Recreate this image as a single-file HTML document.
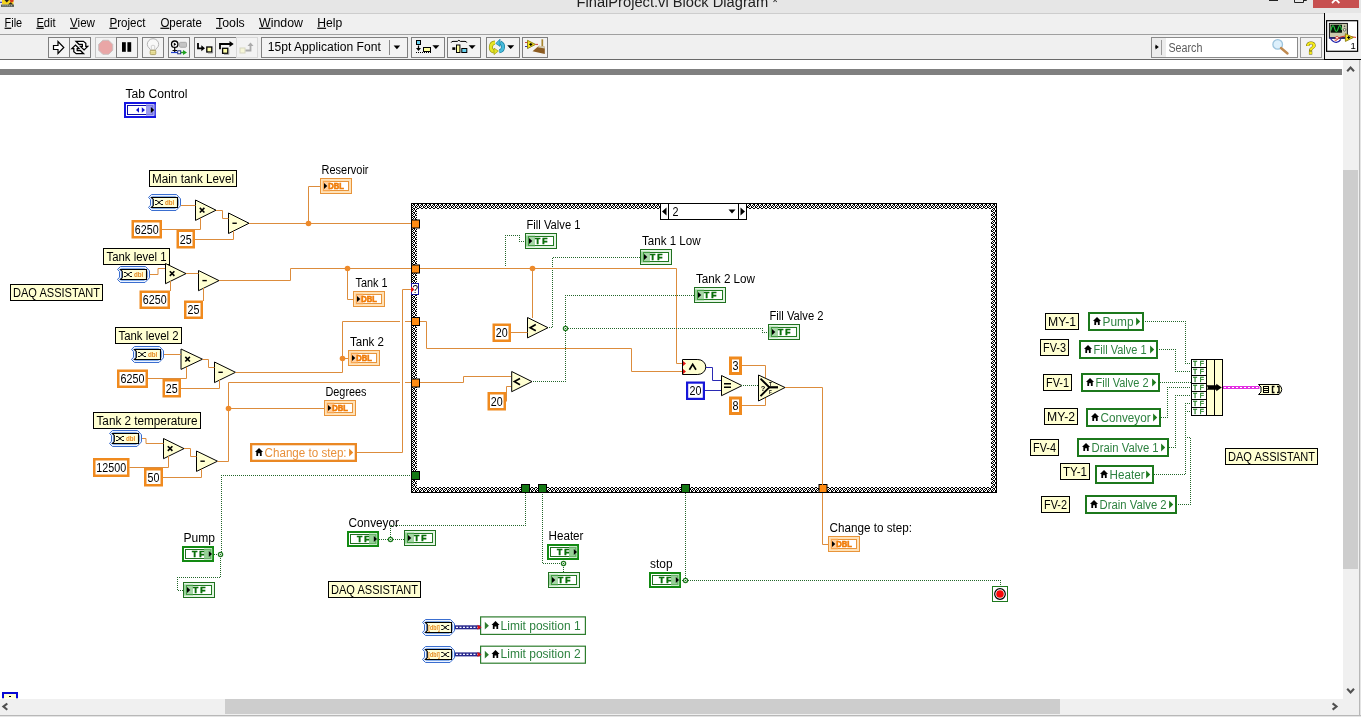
<!DOCTYPE html>
<html><head><meta charset="utf-8"><title>FinalProject.vi Block Diagram *</title>
<style>
html,body{margin:0;padding:0;background:#fff;}
body{width:1361px;height:717px;overflow:hidden;position:relative;font-family:"Liberation Sans", Arial, sans-serif;font-size:12px;color:#000;}
.abs{position:absolute;}
#title{left:0;top:0;width:1361px;height:13px;background:#E6E6E6;}
#menubar{left:0;top:13px;width:1361px;height:21px;background:#F0F0F0;border-top:1px solid #CDCDCD;box-sizing:border-box;}
#toolbar{left:0;top:34px;width:1325px;height:26px;background:#F0F0F0;border-top:1px solid #A0A0A0;border-bottom:1px solid #696969;box-sizing:border-box;}
#gap{left:0;top:60px;width:1343px;height:9px;background:#fff;}
#band{left:0;top:69px;width:1342px;height:6px;background:#808080;}
#vscroll{left:1343px;top:60px;width:16px;height:639px;background:#F0F0F0;}
#vthumb{left:1343px;top:170px;width:15px;height:399px;background:#CDCDCD;}
#hscroll{left:0;top:699px;width:1359px;height:16px;background:#F0F0F0;}
#hthumb{left:225px;top:699px;width:835px;height:15px;background:#CDCDCD;}
#redge{left:1359px;top:60px;width:2px;height:657px;background:#E4E4E4;border-left:1px solid #B8B8B8;box-sizing:border-box;}
#bedge{left:0;top:715px;width:1361px;height:2px;background:#E4E4E4;border-top:1px solid #B8B8B8;box-sizing:border-box;}
#iconpane{left:1324px;top:13px;width:37px;height:47px;background:#F0F0F0;border-left:1px solid #000;border-bottom:1px solid #000;box-sizing:border-box;}
svg text{font-family:"Liberation Sans", Arial, sans-serif;}
</style></head><body>
<div id="title" class="abs"></div>
<div id="menubar" class="abs"></div>
<div id="toolbar" class="abs"></div>
<div id="gap" class="abs"></div>
<div id="band" class="abs"></div>
<div id="vscroll" class="abs"></div><div id="vthumb" class="abs"></div>
<div id="hscroll" class="abs"></div><div id="hthumb" class="abs"></div>
<div id="redge" class="abs"></div><div id="bedge" class="abs"></div>
<div id="iconpane" class="abs"></div>
<!--TOOLBAR-->
<svg class="abs" style="left:0;top:0;will-change:transform" width="1361" height="717" viewBox="0 0 1361 717">
<defs>
<pattern id="gdots" width="2" height="2" patternUnits="userSpaceOnUse"><rect x="0" y="0" width="1" height="1" fill="#22662A"/><rect x="1" y="1" width="1" height="1" fill="#22662A"/></pattern>
<pattern id="chk" width="4" height="4" patternUnits="userSpaceOnUse"><rect width="4" height="4" fill="#fff"/><rect x="1" y="0" width="1" height="1" fill="#000"/><rect x="2" y="0" width="1" height="1" fill="#000"/><rect x="0" y="1" width="1" height="1" fill="#000"/><rect x="2" y="1" width="1" height="1" fill="#000"/><rect x="1" y="2" width="1" height="1" fill="#000"/><rect x="3" y="2" width="1" height="1" fill="#000"/><rect x="0" y="3" width="1" height="1" fill="#000"/><rect x="3" y="3" width="1" height="1" fill="#000"/></pattern>
</defs>
<g id="chrome">
<text x="4.6" y="26.7" font-size="12" fill="#000" textLength="17.6" lengthAdjust="spacingAndGlyphs"><tspan text-decoration="underline">F</tspan>ile</text>
<text x="36.4" y="26.7" font-size="12" fill="#000" textLength="19.2" lengthAdjust="spacingAndGlyphs"><tspan text-decoration="underline">E</tspan>dit</text>
<text x="70" y="26.7" font-size="12" fill="#000" textLength="25" lengthAdjust="spacingAndGlyphs"><tspan text-decoration="underline">V</tspan>iew</text>
<text x="109.4" y="26.7" font-size="12" fill="#000" textLength="36.2" lengthAdjust="spacingAndGlyphs"><tspan text-decoration="underline">P</tspan>roject</text>
<text x="160.4" y="26.7" font-size="12" fill="#000" textLength="41.5" lengthAdjust="spacingAndGlyphs"><tspan text-decoration="underline">O</tspan>perate</text>
<text x="216" y="26.7" font-size="12" fill="#000" textLength="28.8" lengthAdjust="spacingAndGlyphs"><tspan text-decoration="underline">T</tspan>ools</text>
<text x="259" y="26.7" font-size="12" fill="#000" textLength="44" lengthAdjust="spacingAndGlyphs"><tspan text-decoration="underline">W</tspan>indow</text>
<text x="317.3" y="26.7" font-size="12" fill="#000" textLength="25" lengthAdjust="spacingAndGlyphs"><tspan text-decoration="underline">H</tspan>elp</text>
<text x="576.5" y="6.8" font-size="15.5" fill="#1E1E1E" textLength="201.5" lengthAdjust="spacingAndGlyphs">FinalProject.vi Block Diagram *</text>
<rect x="48.5" y="37.5" width="21" height="20" fill="#F3F3F3" stroke="#7F7F7F" stroke-width="1"/>
<rect x="69.5" y="37.5" width="21" height="20" fill="#F3F3F3" stroke="#7F7F7F" stroke-width="1"/>
<rect x="95.5" y="37.5" width="21" height="20" fill="#F3F3F3" stroke="#C4C4C4" stroke-width="1"/>
<rect x="116.5" y="37.5" width="21" height="20" fill="#F3F3F3" stroke="#7F7F7F" stroke-width="1"/>
<rect x="142.5" y="37.5" width="21" height="20" fill="#F3F3F3" stroke="#7F7F7F" stroke-width="1"/>
<rect x="168.5" y="37.5" width="21" height="20" fill="#F3F3F3" stroke="#7F7F7F" stroke-width="1"/>
<rect x="194.5" y="37.5" width="21" height="20" fill="#F3F3F3" stroke="#7F7F7F" stroke-width="1"/>
<rect x="215.5" y="37.5" width="21" height="20" fill="#F3F3F3" stroke="#7F7F7F" stroke-width="1"/>
<rect x="236.5" y="37.5" width="21" height="20" fill="#F3F3F3" stroke="#D8D8D8" stroke-width="1"/>
<path d="M53.5 45.5 H58 V41.5 L63.8 47.5 L58 53.5 V49.5 H53.5 Z" fill="#fff" stroke="#000" stroke-width="1.2" stroke-linejoin="miter"/>
<path d="M76.0 41.3 L83.4 41.3 L85.8 43.3 L85.8 46.4 L87.7 46.4 L84.1 49.9 L80.5 46.4 L82.4 46.4 L82.4 44.3 L79.0 44.3 Z" fill="#fff" stroke="#000" stroke-width="1.25" stroke-linejoin="miter"/>
<path d="M83.6 53.7 L76.2 53.7 L73.8 51.7 L73.8 48.6 L71.9 48.6 L75.5 45.1 L79.1 48.6 L77.2 48.6 L77.2 50.7 L80.6 50.7 Z" fill="#fff" stroke="#000" stroke-width="1.25" stroke-linejoin="miter"/>
<polygon points="112.72,50.21 108.61,54.32 102.79,54.32 98.68,50.21 98.68,44.39 102.79,40.28 108.61,40.28 112.72,44.39" fill="#E9A6A6" stroke="#C9C0C0" stroke-width="1"/>
<rect x="122" y="42.2" width="3.8" height="9.6" fill="#000"/><rect x="127.4" y="42.2" width="3.8" height="9.6" fill="#000"/>
<path d="M150.6 50.2 C150.6 48.6 147.3 47.6 147.3 44.4 A5.7 5.7 0 0 1 158.7 44.4 C158.7 47.6 155.4 48.6 155.4 50.2 Z" fill="#F8F8F8" stroke="#B4B4B4" stroke-width="1"/>
<path d="M151.3 49.5 V45.8 Q153 44.6 154.7 45.8 V49.5" fill="none" stroke="#D0D0D0" stroke-width="1"/>
<rect x="150.2" y="50.2" width="5.6" height="4.4" rx="1" fill="#D9CC7C" stroke="#9A8C48" stroke-width="0.7"/>
<path d="M150.6 51.6 H155.4 M150.6 53.1 H155.4" stroke="#F6F0B8" stroke-width="0.7"/>
<circle cx="174.7" cy="44.2" r="3.2" fill="#fff" stroke="#000" stroke-width="1.3"/>
<path d="M173.8 42.5 L176.3 44.2 L173.8 46 Z" fill="#000"/>
<path d="M174.7 47.5 V52 M172.5 50.5 H177" stroke="#000" stroke-width="1.2"/>
<rect x="179.5" y="42.3" width="7" height="5" rx="1" fill="#C4C4C4" stroke="#A0A0A0" stroke-width="0.8"/>
<path d="M171 52.5 H178" stroke="#2040D0" stroke-width="1.2"/>
<rect x="177.7" y="50.8" width="3" height="3" fill="#fff" stroke="#203080" stroke-width="1"/>
<path d="M181 52.5 H184" stroke="#20A020" stroke-width="1.4"/><path d="M183 50 L187 52.5 L183 55 Z" fill="#20A020"/>
<path d="M198 43 V48.3 H202" fill="none" stroke="#000" stroke-width="1.8"/><path d="M201.3 45.3 L205 48.3 L201.3 51.3 Z" fill="#000"/>
<rect x="206.8" y="47" width="5" height="5" fill="#FFFFA8" stroke="#000" stroke-width="1.3"/>
<path d="M208 53 H212.6 V48" fill="none" stroke="#888" stroke-width="0.8"/>
<path d="M220 49.3 V44 H230" fill="none" stroke="#000" stroke-width="1.8"/><path d="M229.5 41 L233.7 44 L229.5 47 Z" fill="#000"/>
<rect x="222.6" y="48.3" width="5.2" height="5" fill="#FFFFA8" stroke="#000" stroke-width="1.3"/>
<path d="M224 54.3 H228.8 V49.5" fill="none" stroke="#888" stroke-width="0.8"/>
<rect x="240" y="48" width="5" height="5" fill="#F6F6D8" stroke="#D6D6C0" stroke-width="1"/>
<path d="M245.5 50.5 H250.5 V45.5" fill="none" stroke="#ABABAB" stroke-width="1.8"/><path d="M247.5 46 L250.5 42.5 L253.5 46 Z" fill="#ABABAB"/>
<rect x="261.5" y="37.5" width="146" height="20" fill="#F3F3F3" stroke="#7F7F7F" stroke-width="1"/>
<path d="M389.5 40 V55" stroke="#8A8A8A" stroke-width="1"/>
<path d="M393.6 45.6 H400.2 L396.9 49.2 Z" fill="#000"/>
<text x="267.8" y="51.2" font-size="12.5" textLength="113" lengthAdjust="spacingAndGlyphs" fill="#000">15pt Application Font</text>
<rect x="411.5" y="37.5" width="33" height="20" fill="#F3F3F3" stroke="#7F7F7F" stroke-width="1"/>
<rect x="416.5" y="40.5" width="4" height="4" fill="#66D0EE" stroke="#000" stroke-width="1"/>
<path d="M418.5 45.5 V50" stroke="#000" stroke-width="1.2"/><path d="M416 48 H421 L418.5 51 Z" fill="#000"/>
<path d="M416 52.5 H431" stroke="#000" stroke-width="1" stroke-dasharray="1 1"/>
<rect x="423.5" y="47.5" width="7" height="4" fill="#FFFFA0" stroke="#000" stroke-width="1"/>
<path d="M432.4 45.3 H439.4 L435.9 49 Z" fill="#000"/>
<rect x="447.5" y="37.5" width="33" height="20" fill="#F3F3F3" stroke="#7F7F7F" stroke-width="1"/>
<path d="M451.2 42.6 Q451.5 41.4 453 41.4 H457.4 L458.9 40.2 L460.4 41.4 H465 Q466.5 41.4 466.8 42.6" fill="none" stroke="#000" stroke-width="1"/>
<rect x="452.3" y="47.3" width="3" height="2.6" fill="#000"/>
<rect x="456.5" y="45" width="3.4" height="7.5" fill="#FFFFA0" stroke="#000" stroke-width="1"/>
<rect x="461.8" y="48.5" width="5" height="4" fill="#66D0EE" stroke="#000" stroke-width="1"/>
<path d="M468.6 45.3 H475.6 L472.1 49 Z" fill="#000"/>
<rect x="486.5" y="37.5" width="33" height="20" fill="#F3F3F3" stroke="#7F7F7F" stroke-width="1"/>
<path d="M495 42.6 A4.4 4.6 0 0 0 494 51.6" fill="none" stroke="#9A9A10" stroke-width="4"/><path d="M495 42.6 A4.4 4.6 0 0 0 494 51.6" fill="none" stroke="#E6E626" stroke-width="2.6"/>
<path d="M494 48.2 L498.4 51 L494 54.6 Z" fill="#E6E626" stroke="#9A9A10" stroke-width="0.7"/>
<path d="M499.3 51.4 A4.4 4.6 0 0 0 500.3 42.6" fill="none" stroke="#187E9E" stroke-width="4"/><path d="M499.3 51.4 A4.4 4.6 0 0 0 500.3 42.6" fill="none" stroke="#48BCDC" stroke-width="2.6"/>
<path d="M500 39.2 L495.8 43.4 L500 46.4 Z" fill="#48BCDC" stroke="#187E9E" stroke-width="0.7"/>
<path d="M507.2 45.3 H514.2 L510.7 49 Z" fill="#000"/>
<rect x="522.5" y="37.5" width="25" height="20" fill="#F3F3F3" stroke="#7F7F7F" stroke-width="1"/>
<path d="M525 42.5 H528" stroke="#D04040" stroke-width="1"/><path d="M525 46.5 H528" stroke="#3030B0" stroke-width="1"/>
<path d="M527.5 40.3 L535.5 44.4 L527.5 48.6 Z" fill="#F2E21E" stroke="#8A7A10" stroke-width="0.9"/>
<path d="M529.3 44.4 H532.3 M530.8 42.9 V45.9" stroke="#000" stroke-width="1.1"/>
<path d="M535.5 44.4 H538" stroke="#D04040" stroke-width="1"/>
<path d="M542.3 39.3 V46" stroke="#A8862E" stroke-width="1.7"/>
<path d="M539 45.8 L544.8 46.8 L544.8 54 L532.5 51.2 Z" fill="#8C5C22"/>
<path d="M539 45.8 L544.8 46.8 L544.8 48.6 L537.6 47.2 Z" fill="#D6CEB4"/>
<rect x="1151.5" y="37.5" width="146" height="20" fill="#fff" stroke="#8A8A8A" stroke-width="1"/>
<rect x="1152" y="38" width="14" height="19" fill="#ECECEC"/>
<path d="M1155.5 44.5 L1158.8 47 L1155.5 49.5 Z" fill="#000"/><path d="M1155 47 H1157" stroke="#000" stroke-width="1"/>
<path d="M1161.5 40 V55" stroke="#9A9A9A" stroke-width="1"/>
<text x="1168.4" y="51.5" font-size="12.5" textLength="34" lengthAdjust="spacingAndGlyphs" fill="#5C5C5C">Search</text>
<circle cx="1277.7" cy="44.4" r="4.8" fill="#DDF0FC" stroke="#9CC4DE" stroke-width="1.3"/>
<path d="M1281 48 L1287.5 53.5" stroke="#C08A50" stroke-width="2.4" stroke-linecap="round"/>
<rect x="1300.5" y="37.5" width="21" height="20" fill="#F3F3F3" stroke="#9A9A9A" stroke-width="1"/>
<text x="1311" y="54" font-size="17" font-weight="bold" text-anchor="middle" fill="#F4EA1A" stroke="#6A6200" stroke-width="0.9" paint-order="stroke">?</text>
<rect x="1326.6" y="20.7" width="31" height="30.6" fill="#fff" stroke="#000" stroke-width="1.2"/>
<rect x="1329.4" y="23.4" width="18" height="14.6" fill="#C9C9AC" stroke="#111" stroke-width="1"/>
<rect x="1330.6" y="24.7" width="11.4" height="8" fill="#06140A"/>
<path d="M1331 30.5 C1332 24.5 1333.6 24.5 1334.6 28.5 S1337 32.5 1338.2 28.5 S1340.6 24.5 1341.6 30" fill="none" stroke="#22C83C" stroke-width="1.1"/>
<circle cx="1344.6" cy="26.2" r="0.8" fill="#444"/><circle cx="1344.6" cy="29.8" r="1.3" fill="#E8E8D8" stroke="#222" stroke-width="0.6"/>
<path d="M1329.4 38 H1345" stroke="#18186A" stroke-width="1.6"/>
<path d="M1330 37.6 Q1332.5 42.6 1336.4 42.4 Q1339 42.2 1340.8 39.4" fill="none" stroke="#2020A8" stroke-width="1.2"/>
<path d="M1334.5 40 Q1336 41 1337.5 39.5 Q1339.5 36.5 1345 36 L1356 37.4" fill="none" stroke="#E03828" stroke-width="1"/>
<circle cx="1337" cy="37.8" r="1.4" fill="#fff" stroke="#E03828" stroke-width="0.8"/>
<path d="M1345.4 33.7 L1353.4 37.5 L1345.4 41.4 Z" fill="#F2E21E" stroke="#8A7A10" stroke-width="0.9"/>
<path d="M1347.2 37.5 H1350.2 M1348.7 36 V39" stroke="#000" stroke-width="1.1"/>
<text x="1350.4" y="48.9" font-size="9.5" fill="#000">1</text>
<rect x="1313" y="0" width="46" height="8" fill="#C75050"/>
<path d="M1332 3 L1335.7 -0.7 L1339.4 3" fill="none" stroke="#fff" stroke-width="1.8"/>
<rect x="1269" y="-2" width="9" height="3" fill="#222"/>
<path d="M1294.5 -3 V2.5 H1303.5 V-3" fill="none" stroke="#222" stroke-width="1"/><path d="M1303.5 0.5 H1306.5 V-3" fill="none" stroke="#222" stroke-width="1"/>
<rect x="2" y="0" width="11.5" height="4.6" fill="#F2D21E"/>
<path d="M4.5 0 H9 L6.8 2.6 Z" fill="#1A1A1A"/><path d="M9.5 0 H13.5 V1.5 L11 2.8 Z" fill="#D83A1A"/><path d="M8 4.5 L10.5 2.2 L13.5 4.5 Z" fill="#2A2A18"/>
<rect x="1" y="4.6" width="13" height="2.3" fill="#555C55"/>
<path d="M2.5 5.7 H13" stroke="#C8CCC8" stroke-width="0.9" stroke-dasharray="1 1.1"/>
<rect x="0" y="1.8" width="2" height="1" fill="#2020C0"/>
<path d="M1347.2 71.2 L1350.6 67.6 L1354 71.2" fill="none" stroke="#505050" stroke-width="2.1"/>
<path d="M1347.2 688.8 L1350.6 692.4 L1354 688.8" fill="none" stroke="#505050" stroke-width="2.1"/>
<path d="M7.3 703.5 L3.4 706.6 L7.3 709.7" fill="none" stroke="#505050" stroke-width="2.1"/>
<path d="M1332.6 703.4 L1336.5 706.5 L1332.6 709.6" fill="none" stroke="#505050" stroke-width="2.1"/>
</g>
<g id="diagram">
<text x="125.5" y="97.5" font-size="12" fill="#000" textLength="62" lengthAdjust="spacingAndGlyphs">Tab Control</text>
<rect x="125.0" y="103.0" width="30" height="14" fill="#fff" stroke="#1616E2" stroke-width="2"/>
<rect x="127.5" y="105.5" width="25" height="9" fill="#fff" stroke="#0C0CA8" stroke-width="1"/>
<path d="M139 107.2 L136 110 L139 112.8 Z M141.8 107.2 L145 110 L141.8 112.8 Z" fill="#1010D0"/>
<rect x="146" y="104.3" width="9.5" height="11.4" fill="#8A8AEA" fill-opacity="0.85"/>
<path d="M150.9 107 L154.2 110 L150.9 113 Z" fill="#000"/>
<rect x="149.5" y="170.5" width="87" height="16" fill="#FFFFD2" stroke="#000" stroke-width="1"/>
<text x="193.0" y="182.6" font-size="12" fill="#000" textLength="82" lengthAdjust="spacingAndGlyphs" text-anchor="middle">Main tank Level</text>
<path d="M151.5 194.5 L176.5 194.5 L180.5 198.8 L180.5 205.8 L176 210.5 L151.5 210.5 L148.5 207.5 L150.5 205.2 L150.5 199.6 L148.5 197.4 Z" fill="#EEF4FF" stroke="#3A6ED0" stroke-width="1"/>
<path d="M152.2 196.5 L175.7 196.5 L178.5 199.5 L178.5 205.2 L175.3 208.5 L152.2 208.5 L150.9 207.3 L152.5 205.5 L152.5 199.3 L150.9 197.6 Z" fill="#fff" stroke="#86AEEA" stroke-width="1"/>
<path d="M151.5 197.5 L177.5 197.5 L177.5 207.5 L151.5 207.5 L153.3 205.5 L153.3 199.5 Z" fill="#FFFFD8" stroke="#000" stroke-width="1.1" stroke-linejoin="miter"/>
<path d="M155 200.5 H157 L158.2 202.0 H159.8 L161 200.5 H163 M155 204.5 H157 L158.2 203.0 H159.8 L161 204.5 H163" stroke="#111" stroke-width="1" fill="none"/>
<rect x="158" y="201.9" width="2" height="1.2" fill="#111"/>
<text x="164.9" y="204.8" font-size="7.2" fill="#E58A20" textLength="9.4" lengthAdjust="spacingAndGlyphs" font-weight="bold">dbl</text>
<path d="M195.5 200 L216 210.2 L195.5 220.4 Z" fill="#FFFFD2" stroke="#000" stroke-width="1"/>
<path d="M199.79999999999998 207.89999999999998 L204.4 212.5 M204.4 207.89999999999998 L199.79999999999998 212.5" stroke="#000" stroke-width="1.6" fill="none"/>
<path d="M228.5 213 L249 223.25 L228.5 233.5 Z" fill="#FFFFD2" stroke="#000" stroke-width="1"/>
<path d="M232.4 223.25 h4.4" stroke="#000" stroke-width="1.4" fill="none"/>
<rect x="132.75" y="221.25" width="28.0" height="16.0" fill="#fff" stroke="#F08A1E" stroke-width="2.5"/>
<text x="146.75" y="233.5" font-size="12" fill="#000" text-anchor="middle" textLength="23.8" lengthAdjust="spacingAndGlyphs">6250</text>
<rect x="177.75" y="230.75" width="16.0" height="16.5" fill="#fff" stroke="#F08A1E" stroke-width="2.5"/>
<text x="185.75" y="243.5" font-size="12" fill="#000" text-anchor="middle" textLength="11.9" lengthAdjust="spacingAndGlyphs">25</text>
<path d="M181 205.5 L195.5 205.5" fill="none" stroke="#DC8C3C" stroke-width="1"/>
<path d="M216 210.5 L222.5 210.5 L222.5 218.5 L228.5 218.5" fill="none" stroke="#DC8C3C" stroke-width="1"/>
<path d="M162 229.5 L200.5 229.5 L200.5 218" fill="none" stroke="#DC8C3C" stroke-width="1"/>
<path d="M195 239.5 L233.5 239.5 L233.5 231" fill="none" stroke="#DC8C3C" stroke-width="1"/>
<path d="M249 223.5 L411 223.5" fill="none" stroke="#DC8C3C" stroke-width="1"/>
<path d="M308.5 223.5 L308.5 186.5 L320 186.5" fill="none" stroke="#DC8C3C" stroke-width="1"/>
<circle cx="308.5" cy="223.5" r="2.8" fill="#EE8A2A"/>
<text x="321.5" y="174" font-size="12" fill="#000" textLength="47" lengthAdjust="spacingAndGlyphs">Reservoir</text>
<rect x="320.5" y="178.5" width="31" height="15" fill="#FFE2B8" stroke="#E8943A" stroke-width="1"/>
<rect x="323.5" y="181.5" width="25" height="9" fill="#fff" stroke="#E8943A" stroke-width="1"/>
<rect x="322.5" y="180.5" width="7.5" height="11" fill="#FFB060" fill-opacity="0.6"/>
<path d="M324 183 L327.3 186 L324 189 Z" fill="#000"/>
<text x="328.2" y="188.9" font-size="8.2" fill="#F07C08" textLength="15.6" lengthAdjust="spacingAndGlyphs" font-weight="bold" stroke="#F07C08" stroke-width="0.6">DBL</text>
<rect x="103.5" y="248.5" width="66" height="16" fill="#FFFFD2" stroke="#000" stroke-width="1"/>
<text x="136.5" y="260.6" font-size="12" fill="#000" textLength="60" lengthAdjust="spacingAndGlyphs" text-anchor="middle">Tank level 1</text>
<path d="M120.5 266.5 L145.5 266.5 L149.5 270.8 L149.5 277.8 L145 282.5 L120.5 282.5 L117.5 279.5 L119.5 277.2 L119.5 271.6 L117.5 269.4 Z" fill="#EEF4FF" stroke="#3A6ED0" stroke-width="1"/>
<path d="M121.2 268.5 L144.7 268.5 L147.5 271.5 L147.5 277.2 L144.3 280.5 L121.2 280.5 L119.9 279.3 L121.5 277.5 L121.5 271.3 L119.9 269.6 Z" fill="#fff" stroke="#86AEEA" stroke-width="1"/>
<path d="M120.5 269.5 L146.5 269.5 L146.5 279.5 L120.5 279.5 L122.3 277.5 L122.3 271.5 Z" fill="#FFFFD8" stroke="#000" stroke-width="1.1" stroke-linejoin="miter"/>
<path d="M124 272.5 H126 L127.2 274.0 H128.8 L130 272.5 H132 M124 276.5 H126 L127.2 275.0 H128.8 L130 276.5 H132" stroke="#111" stroke-width="1" fill="none"/>
<rect x="127" y="273.9" width="2" height="1.2" fill="#111"/>
<text x="133.9" y="276.8" font-size="7.2" fill="#E58A20" textLength="9.4" lengthAdjust="spacingAndGlyphs" font-weight="bold">dbl</text>
<path d="M150 274.5 L158 274.5 L158 268.5 L168 268.5" fill="none" stroke="#DC8C3C" stroke-width="1"/>
<path d="M165.5 263.5 L186 273.6 L165.5 283.7 Z" fill="#FFFFD2" stroke="#000" stroke-width="1"/>
<path d="M169.79999999999998 271.3 L174.4 275.90000000000003 M174.4 271.3 L169.79999999999998 275.90000000000003" stroke="#000" stroke-width="1.6" fill="none"/>
<path d="M198.5 270.5 L219 280.6 L198.5 290.7 Z" fill="#FFFFD2" stroke="#000" stroke-width="1"/>
<path d="M202.4 280.6 h4.4" stroke="#000" stroke-width="1.4" fill="none"/>
<rect x="140.75" y="291.75" width="28.0" height="16.0" fill="#fff" stroke="#F08A1E" stroke-width="2.5"/>
<text x="154.75" y="304" font-size="12" fill="#000" text-anchor="middle" textLength="23.8" lengthAdjust="spacingAndGlyphs">6250</text>
<rect x="185.25" y="301.75" width="16.5" height="16.0" fill="#fff" stroke="#F08A1E" stroke-width="2.5"/>
<text x="193.5" y="314" font-size="12" fill="#000" text-anchor="middle" textLength="11.9" lengthAdjust="spacingAndGlyphs">25</text>
<path d="M186 273.5 L198.5 273.5" fill="none" stroke="#DC8C3C" stroke-width="1"/>
<path d="M170.5 291 L170.5 281" fill="none" stroke="#DC8C3C" stroke-width="1"/>
<path d="M203.5 301 L203.5 288" fill="none" stroke="#DC8C3C" stroke-width="1"/>
<path d="M219 280.5 L290.5 280.5 L290.5 268.5 L411 268.5" fill="none" stroke="#DC8C3C" stroke-width="1"/>
<path d="M347.5 268.5 L347.5 299.5 L354 299.5" fill="none" stroke="#DC8C3C" stroke-width="1"/>
<circle cx="347.5" cy="268.5" r="2.8" fill="#EE8A2A"/>
<text x="355.5" y="287" font-size="12" fill="#000" textLength="32" lengthAdjust="spacingAndGlyphs">Tank 1</text>
<rect x="353.5" y="291.5" width="31" height="15" fill="#FFE2B8" stroke="#E8943A" stroke-width="1"/>
<rect x="356.5" y="294.5" width="25" height="9" fill="#fff" stroke="#E8943A" stroke-width="1"/>
<rect x="355.5" y="293.5" width="7.5" height="11" fill="#FFB060" fill-opacity="0.6"/>
<path d="M357 296 L360.3 299 L357 302 Z" fill="#000"/>
<text x="361.2" y="301.9" font-size="8.2" fill="#F07C08" textLength="15.6" lengthAdjust="spacingAndGlyphs" font-weight="bold" stroke="#F07C08" stroke-width="0.6">DBL</text>
<rect x="10.5" y="284.5" width="92" height="16" fill="#FFFFD2" stroke="#000" stroke-width="1"/>
<text x="56.5" y="296.6" font-size="12" fill="#000" textLength="87" lengthAdjust="spacingAndGlyphs" text-anchor="middle">DAQ ASSISTANT</text>
<rect x="115.5" y="327.5" width="66" height="16" fill="#FFFFD2" stroke="#000" stroke-width="1"/>
<text x="148.5" y="339.6" font-size="12" fill="#000" textLength="60" lengthAdjust="spacingAndGlyphs" text-anchor="middle">Tank level 2</text>
<path d="M134.5 346.5 L159.5 346.5 L163.5 350.8 L163.5 357.8 L159 362.5 L134.5 362.5 L131.5 359.5 L133.5 357.2 L133.5 351.6 L131.5 349.4 Z" fill="#EEF4FF" stroke="#3A6ED0" stroke-width="1"/>
<path d="M135.2 348.5 L158.7 348.5 L161.5 351.5 L161.5 357.2 L158.3 360.5 L135.2 360.5 L133.9 359.3 L135.5 357.5 L135.5 351.3 L133.9 349.6 Z" fill="#fff" stroke="#86AEEA" stroke-width="1"/>
<path d="M134.5 349.5 L160.5 349.5 L160.5 359.5 L134.5 359.5 L136.3 357.5 L136.3 351.5 Z" fill="#FFFFD8" stroke="#000" stroke-width="1.1" stroke-linejoin="miter"/>
<path d="M138 352.5 H140 L141.2 354.0 H142.8 L144 352.5 H146 M138 356.5 H140 L141.2 355.0 H142.8 L144 356.5 H146" stroke="#111" stroke-width="1" fill="none"/>
<rect x="141" y="353.9" width="2" height="1.2" fill="#111"/>
<text x="147.9" y="356.8" font-size="7.2" fill="#E58A20" textLength="9.4" lengthAdjust="spacingAndGlyphs" font-weight="bold">dbl</text>
<path d="M181 349 L202.5 359.2 L181 369.4 Z" fill="#FFFFD2" stroke="#000" stroke-width="1"/>
<path d="M185.29999999999998 356.9 L189.9 361.5 M189.9 356.9 L185.29999999999998 361.5" stroke="#000" stroke-width="1.6" fill="none"/>
<path d="M214.5 362 L235.5 372.3 L214.5 382.6 Z" fill="#FFFFD2" stroke="#000" stroke-width="1"/>
<path d="M218.4 372.3 h4.4" stroke="#000" stroke-width="1.4" fill="none"/>
<rect x="118.25" y="370.75" width="28.5" height="16.0" fill="#fff" stroke="#F08A1E" stroke-width="2.5"/>
<text x="132.5" y="383" font-size="12" fill="#000" text-anchor="middle" textLength="23.8" lengthAdjust="spacingAndGlyphs">6250</text>
<rect x="163.75" y="380.25" width="16.0" height="16.0" fill="#fff" stroke="#F08A1E" stroke-width="2.5"/>
<text x="171.75" y="392.5" font-size="12" fill="#000" text-anchor="middle" textLength="11.9" lengthAdjust="spacingAndGlyphs">25</text>
<path d="M164 354.5 L181 354.5" fill="none" stroke="#DC8C3C" stroke-width="1"/>
<path d="M202.5 359.5 L208.5 359.5 L208.5 367.5 L214.5 367.5" fill="none" stroke="#DC8C3C" stroke-width="1"/>
<path d="M148 378.5 L186.5 378.5 L186.5 367" fill="none" stroke="#DC8C3C" stroke-width="1"/>
<path d="M181 388.5 L219.5 388.5 L219.5 380" fill="none" stroke="#DC8C3C" stroke-width="1"/>
<path d="M235.5 372.5 L342.5 372.5 L342.5 321.5 L411 321.5" fill="none" stroke="#DC8C3C" stroke-width="1"/>
<path d="M342.5 358.5 L348 358.5" fill="none" stroke="#DC8C3C" stroke-width="1"/>
<circle cx="342.5" cy="358.5" r="2.8" fill="#EE8A2A"/>
<text x="350" y="346" font-size="12" fill="#000" textLength="34" lengthAdjust="spacingAndGlyphs">Tank 2</text>
<rect x="348.5" y="350.5" width="31" height="15" fill="#FFE2B8" stroke="#E8943A" stroke-width="1"/>
<rect x="351.5" y="353.5" width="25" height="9" fill="#fff" stroke="#E8943A" stroke-width="1"/>
<rect x="350.5" y="352.5" width="7.5" height="11" fill="#FFB060" fill-opacity="0.6"/>
<path d="M352 355 L355.3 358 L352 361 Z" fill="#000"/>
<text x="356.2" y="360.9" font-size="8.2" fill="#F07C08" textLength="15.6" lengthAdjust="spacingAndGlyphs" font-weight="bold" stroke="#F07C08" stroke-width="0.6">DBL</text>
<rect x="93.5" y="412.5" width="107" height="16" fill="#FFFFD2" stroke="#000" stroke-width="1"/>
<text x="147.0" y="424.6" font-size="12" fill="#000" textLength="101" lengthAdjust="spacingAndGlyphs" text-anchor="middle">Tank 2 temperature</text>
<path d="M112.5 430.5 L137.5 430.5 L141.5 434.8 L141.5 441.8 L137 446.5 L112.5 446.5 L109.5 443.5 L111.5 441.2 L111.5 435.6 L109.5 433.4 Z" fill="#EEF4FF" stroke="#3A6ED0" stroke-width="1"/>
<path d="M113.2 432.5 L136.7 432.5 L139.5 435.5 L139.5 441.2 L136.3 444.5 L113.2 444.5 L111.9 443.3 L113.5 441.5 L113.5 435.3 L111.9 433.6 Z" fill="#fff" stroke="#86AEEA" stroke-width="1"/>
<path d="M112.5 433.5 L138.5 433.5 L138.5 443.5 L112.5 443.5 L114.3 441.5 L114.3 435.5 Z" fill="#FFFFD8" stroke="#000" stroke-width="1.1" stroke-linejoin="miter"/>
<path d="M116 436.5 H118 L119.2 438.0 H120.8 L122 436.5 H124 M116 440.5 H118 L119.2 439.0 H120.8 L122 440.5 H124" stroke="#111" stroke-width="1" fill="none"/>
<rect x="119" y="437.9" width="2" height="1.2" fill="#111"/>
<text x="125.9" y="440.8" font-size="7.2" fill="#E58A20" textLength="9.4" lengthAdjust="spacingAndGlyphs" font-weight="bold">dbl</text>
<path d="M163.5 438.5 L184 448.6 L163.5 458.7 Z" fill="#FFFFD2" stroke="#000" stroke-width="1"/>
<path d="M167.79999999999998 446.3 L172.4 450.90000000000003 M172.4 446.3 L167.79999999999998 450.90000000000003" stroke="#000" stroke-width="1.6" fill="none"/>
<path d="M196.5 451 L217.5 461.2 L196.5 471.4 Z" fill="#FFFFD2" stroke="#000" stroke-width="1"/>
<path d="M200.4 461.2 h4.4" stroke="#000" stroke-width="1.4" fill="none"/>
<rect x="94.25" y="459.25" width="34.0" height="16.5" fill="#fff" stroke="#F08A1E" stroke-width="2.5"/>
<text x="111.25" y="472" font-size="12" fill="#000" text-anchor="middle" textLength="29.8" lengthAdjust="spacingAndGlyphs">12500</text>
<rect x="145.25" y="469.25" width="16.5" height="16.0" fill="#fff" stroke="#F08A1E" stroke-width="2.5"/>
<text x="153.5" y="481.5" font-size="12" fill="#000" text-anchor="middle" textLength="11.9" lengthAdjust="spacingAndGlyphs">50</text>
<path d="M142 438.5 L146 438.5 L146 443.5 L163.5 443.5" fill="none" stroke="#DC8C3C" stroke-width="1"/>
<path d="M184 448.5 L190.5 448.5 L190.5 456.5 L196.5 456.5" fill="none" stroke="#DC8C3C" stroke-width="1"/>
<path d="M129.5 467.5 L168.5 467.5 L168.5 456" fill="none" stroke="#DC8C3C" stroke-width="1"/>
<path d="M163 477.5 L201.5 477.5 L201.5 469" fill="none" stroke="#DC8C3C" stroke-width="1"/>
<path d="M217.5 461.5 L228.5 461.5 L228.5 382.5 L411 382.5" fill="none" stroke="#DC8C3C" stroke-width="1"/>
<path d="M228.5 408.5 L324 408.5" fill="none" stroke="#DC8C3C" stroke-width="1"/>
<circle cx="228.5" cy="408.5" r="2.8" fill="#EE8A2A"/>
<text x="325.5" y="395.5" font-size="12" fill="#000" textLength="41" lengthAdjust="spacingAndGlyphs">Degrees</text>
<rect x="324.5" y="400.5" width="31" height="15" fill="#FFE2B8" stroke="#E8943A" stroke-width="1"/>
<rect x="327.5" y="403.5" width="25" height="9" fill="#fff" stroke="#E8943A" stroke-width="1"/>
<rect x="326.5" y="402.5" width="7.5" height="11" fill="#FFB060" fill-opacity="0.6"/>
<path d="M328 405 L331.3 408 L328 411 Z" fill="#000"/>
<text x="332.2" y="410.9" font-size="8.2" fill="#F07C08" textLength="15.6" lengthAdjust="spacingAndGlyphs" font-weight="bold" stroke="#F07C08" stroke-width="0.6">DBL</text>
<rect x="251.15" y="444.15" width="104.7" height="16.7" fill="#fff" stroke="#EA8824" stroke-width="2.3"/>
<path d="M259.005 447.9 L263.01 451.905 L261.675 451.905 L261.675 455.90999999999997 L259.895 455.90999999999997 L259.895 453.23999999999995 L258.115 453.23999999999995 L258.115 455.90999999999997 L256.335 455.90999999999997 L256.335 451.905 L255 451.905 Z" fill="#000"/>
<text x="264.6" y="456.9" font-size="12" fill="#E8903A" textLength="82" lengthAdjust="spacingAndGlyphs">Change to step:</text>
<path d="M349.1 448.6 L353.20000000000005 452.5 L349.1 456.4 Z" fill="#EA8824"/>
<path d="M357 452.5 L402.5 452.5 L402.5 289.5 L411 289.5" fill="none" stroke="#DC8C3C" stroke-width="1"/>
<rect x="400" y="321" width="2" height="1" fill="#fff"/><rect x="403" y="321" width="2" height="1" fill="#fff"/>
<rect x="400" y="382" width="2" height="1" fill="#fff"/><rect x="403" y="382" width="2" height="1" fill="#fff"/>
<rect x="414.5" y="206.5" width="579" height="283" fill="none" stroke="url(#chk)" stroke-width="5"/>
<rect x="411.5" y="203.5" width="585" height="289" fill="none" stroke="#000" stroke-width="1"/>
<rect x="660.5" y="203.5" width="86" height="16" fill="#fff" stroke="#000" stroke-width="1"/>
<path d="M668.5 203 V220 M738.5 203 V220" stroke="#000" stroke-width="1"/>
<path d="M666.5 207.5 L662 211.5 L666.5 215.5 Z M740.5 207.5 L745 211.5 L740.5 215.5 Z" fill="#000"/>
<path d="M728.5 209.5 L735.5 209.5 L732 213.5 Z" fill="#000"/>
<text x="672.5" y="216" font-size="12" fill="#000" textLength="6" lengthAdjust="spacingAndGlyphs">2</text>
<rect x="411.5" y="220.0" width="8" height="8" fill="#FF8C14" stroke="#000" stroke-width="1"/>
<rect x="411.5" y="265.0" width="8" height="8" fill="#FF8C14" stroke="#000" stroke-width="1"/>
<rect x="411.5" y="317.5" width="8" height="8" fill="#FF8C14" stroke="#000" stroke-width="1"/>
<rect x="411.5" y="379.0" width="8" height="8" fill="#FF8C14" stroke="#000" stroke-width="1"/>
<rect x="411.5" y="471.5" width="8" height="8" fill="#147814" stroke="#000" stroke-width="1"/>
<rect x="521.5" y="484.5" width="8" height="8" fill="#147814" stroke="#000" stroke-width="1"/>
<rect x="538.5" y="484.5" width="8" height="8" fill="#147814" stroke="#000" stroke-width="1"/>
<rect x="681.5" y="484.5" width="8" height="8" fill="#147814" stroke="#000" stroke-width="1"/>
<rect x="819.0" y="484.5" width="8" height="8" fill="#FF8C14" stroke="#000" stroke-width="1"/>
<rect x="411.5" y="283.5" width="7" height="11" fill="#fff" stroke="#1818A0" stroke-width="1"/>
<text x="415.2" y="293" font-size="10" fill="#000" text-anchor="middle">?</text>
<path d="M411 286.5 L414.5 289.5 L411 292.5 Z" fill="#E01010"/>
<text x="526.5" y="229" font-size="12" fill="#000" textLength="54" lengthAdjust="spacingAndGlyphs">Fill Valve 1</text>
<rect x="525.5" y="233.5" width="31" height="15" fill="#E4F5E4" stroke="#1F701F" stroke-width="1"/>
<rect x="528.5" y="236.5" width="25" height="9" fill="#fff" stroke="#1F7A1F" stroke-width="1"/>
<rect x="526" y="235.5" width="9" height="11" fill="#5DB45D" fill-opacity="0.55"/>
<path d="M529 238 L532.3 241 L529 244 Z" fill="#000"/>
<text x="535.1" y="244" font-size="8.5" fill="#0C700C" font-weight="bold" letter-spacing="1.9" stroke="#0C700C" stroke-width="0.55">TF</text>
<rect x="519" y="241" width="6" height="1" fill="url(#gdots)"/>
<rect x="519" y="235" width="1" height="7" fill="url(#gdots)"/>
<rect x="505" y="235" width="15" height="1" fill="url(#gdots)"/>
<rect x="505" y="235" width="1" height="31" fill="url(#gdots)"/>
<text x="642" y="245" font-size="12" fill="#000" textLength="58.5" lengthAdjust="spacingAndGlyphs">Tank 1 Low</text>
<rect x="640.5" y="249.5" width="31" height="15" fill="#E4F5E4" stroke="#1F701F" stroke-width="1"/>
<rect x="643.5" y="252.5" width="25" height="9" fill="#fff" stroke="#1F7A1F" stroke-width="1"/>
<rect x="641" y="251.5" width="9" height="11" fill="#5DB45D" fill-opacity="0.55"/>
<path d="M644 254 L647.3 257 L644 260 Z" fill="#000"/>
<text x="650.1" y="260" font-size="8.5" fill="#0C700C" font-weight="bold" letter-spacing="1.9" stroke="#0C700C" stroke-width="0.55">TF</text>
<rect x="552" y="257" width="88" height="1" fill="url(#gdots)"/>
<rect x="552" y="257" width="1" height="71" fill="url(#gdots)"/>
<rect x="548" y="327" width="5" height="1" fill="url(#gdots)"/>
<path d="M420 268.5 L676.5 268.5 L676.5 363.5 L683 363.5" fill="none" stroke="#DC8C3C" stroke-width="1"/>
<circle cx="532.5" cy="268.5" r="2.8" fill="#EE8A2A"/>
<path d="M532.5 268.5 L532.5 318" fill="none" stroke="#DC8C3C" stroke-width="1"/>
<path d="M527.5 317.5 L548 327.7 L527.5 337.9 Z" fill="#FFFFD2" stroke="#000" stroke-width="1"/>
<path d="M535.8 324.59999999999997 L530.1999999999999 327.7 L535.8 330.8" stroke="#000" stroke-width="1.7" fill="none"/>
<rect x="493.75" y="324.75" width="16.0" height="16.0" fill="#fff" stroke="#F08A1E" stroke-width="2.5"/>
<text x="501.75" y="337" font-size="12" fill="#000" text-anchor="middle" textLength="11.9" lengthAdjust="spacingAndGlyphs">20</text>
<path d="M511 332.5 L527.5 332.5" fill="none" stroke="#DC8C3C" stroke-width="1"/>
<text x="696" y="283" font-size="12" fill="#000" textLength="59" lengthAdjust="spacingAndGlyphs">Tank 2 Low</text>
<rect x="694.5" y="287.5" width="31" height="15" fill="#E4F5E4" stroke="#1F701F" stroke-width="1"/>
<rect x="697.5" y="290.5" width="25" height="9" fill="#fff" stroke="#1F7A1F" stroke-width="1"/>
<rect x="695" y="289.5" width="9" height="11" fill="#5DB45D" fill-opacity="0.55"/>
<path d="M698 292 L701.3 295 L698 298 Z" fill="#000"/>
<text x="704.1" y="298" font-size="8.5" fill="#0C700C" font-weight="bold" letter-spacing="1.9" stroke="#0C700C" stroke-width="0.55">TF</text>
<rect x="565" y="295" width="129" height="1" fill="url(#gdots)"/>
<rect x="565" y="295" width="1" height="87" fill="url(#gdots)"/>
<rect x="532" y="381" width="34" height="1" fill="url(#gdots)"/>
<circle cx="565.5" cy="328.5" r="2.1" fill="#fff" stroke="#1E7A1E" stroke-width="1.3"/>
<rect x="564.9" y="327.9" width="1.2" height="1.2" fill="#1E7A1E"/>
<rect x="567" y="328" width="196" height="1" fill="url(#gdots)"/>
<rect x="762" y="328" width="1" height="5" fill="url(#gdots)"/>
<rect x="762" y="332" width="6" height="1" fill="url(#gdots)"/>
<text x="769.5" y="320" font-size="12" fill="#000" textLength="54" lengthAdjust="spacingAndGlyphs">Fill Valve 2</text>
<rect x="768.5" y="324.5" width="31" height="15" fill="#E4F5E4" stroke="#1F701F" stroke-width="1"/>
<rect x="771.5" y="327.5" width="25" height="9" fill="#fff" stroke="#1F7A1F" stroke-width="1"/>
<rect x="769" y="326.5" width="9" height="11" fill="#5DB45D" fill-opacity="0.55"/>
<path d="M772 329 L775.3 332 L772 335 Z" fill="#000"/>
<text x="778.1" y="335" font-size="8.5" fill="#0C700C" font-weight="bold" letter-spacing="1.9" stroke="#0C700C" stroke-width="0.55">TF</text>
<path d="M420 321.5 L426.5 321.5 L426.5 348.5 L631.5 348.5 L631.5 371.5 L683 371.5" fill="none" stroke="#DC8C3C" stroke-width="1"/>
<path d="M420 382.5 L463.5 382.5 L463.5 376.5 L511 376.5" fill="none" stroke="#DC8C3C" stroke-width="1"/>
<path d="M511.7 371.5 L532 381.6 L511.7 391.7 Z" fill="#FFFFD2" stroke="#000" stroke-width="1"/>
<path d="M520.0 378.5 L514.4 381.6 L520.0 384.70000000000005" stroke="#000" stroke-width="1.7" fill="none"/>
<rect x="488.75" y="393.25" width="16.0" height="16.0" fill="#fff" stroke="#F08A1E" stroke-width="2.5"/>
<text x="496.75" y="405.5" font-size="12" fill="#000" text-anchor="middle" textLength="11.9" lengthAdjust="spacingAndGlyphs">20</text>
<path d="M506.5 401.5 L506.5 386.5 L511 386.5" fill="none" stroke="#DC8C3C" stroke-width="1"/>
<path d="M682.5 359.5 L697.8 359.5 A8 7.5 0 0 1 697.8 374.5 L682.5 374.5 Z" fill="#FFFFD2" stroke="#000" stroke-width="1"/>
<path d="M689.4 369.8 L692.7 364.4 L696 369.8" fill="none" stroke="#000" stroke-width="1.7"/>
<path d="M683 361 L686 363.5 L683 366 Z M683 369 L686 371.5 L683 374 Z" fill="#E01010"/>
<rect x="687.1" y="382.6" width="16.8" height="16.3" fill="#fff" stroke="#1616D8" stroke-width="2.2"/>
<text x="695.5" y="395" font-size="12" fill="#000" text-anchor="middle" textLength="11.9" lengthAdjust="spacingAndGlyphs">20</text>
<path d="M706 367.5 L712.5 367.5 L712.5 380.5 L721.5 380.5" fill="none" stroke="#2A2AB4" stroke-width="1"/>
<path d="M705 390.5 L721.5 390.5" fill="none" stroke="#2A2AB4" stroke-width="1"/>
<path d="M721.5 375.5 L742 385.6 L721.5 395.7 Z" fill="#FFFFD2" stroke="#000" stroke-width="1"/>
<path d="M724 383.8 H731 M724 387.2 H731" stroke="#000" stroke-width="1.5"/>
<rect x="730.5" y="358.0" width="10" height="15.5" fill="#fff" stroke="#F08A1E" stroke-width="3"/>
<text x="735.5" y="370" font-size="12" fill="#000" text-anchor="middle" textLength="6.0" lengthAdjust="spacingAndGlyphs">3</text>
<rect x="730.5" y="398.0" width="10" height="15.5" fill="#fff" stroke="#F08A1E" stroke-width="3"/>
<text x="735.5" y="410" font-size="12" fill="#000" text-anchor="middle" textLength="6.0" lengthAdjust="spacingAndGlyphs">8</text>
<path d="M742 365.5 L765.5 365.5 L765.5 378" fill="none" stroke="#DC8C3C" stroke-width="1"/>
<path d="M742 405.5 L765.5 405.5 L765.5 398" fill="none" stroke="#DC8C3C" stroke-width="1"/>
<rect x="741" y="385" width="17" height="1" fill="url(#gdots)"/>
<path d="M758.5 375 L785 387.5 L758.5 401 Z" fill="#FFFFD2" stroke="#000" stroke-width="1"/>
<path d="M760.5 378.6 L769.3 387.3 L760.5 396.2" stroke="#000" stroke-width="1.9" fill="none"/>
<path d="M769 387.3 H778" stroke="#000" stroke-width="2.2" fill="none"/>
<text x="760.8" y="391.2" font-size="7.5" fill="#000" font-weight="bold">?</text>
<text x="769" y="385.6" font-size="4.6" fill="#000" font-weight="bold">T</text>
<text x="769" y="393.6" font-size="4.6" fill="#000" font-weight="bold">F</text>
<path d="M785 387.5 L822.5 387.5 L822.5 485" fill="none" stroke="#DC8C3C" stroke-width="1"/>
<rect x="221" y="475" width="190" height="1" fill="url(#gdots)"/>
<rect x="221" y="475" width="1" height="78" fill="url(#gdots)"/>
<rect x="220" y="556" width="1" height="22" fill="url(#gdots)"/>
<rect x="177" y="577" width="44" height="1" fill="url(#gdots)"/>
<rect x="177" y="577" width="1" height="14" fill="url(#gdots)"/>
<rect x="177" y="590" width="6" height="1" fill="url(#gdots)"/>
<text x="183.5" y="542" font-size="12" fill="#000" textLength="31.5" lengthAdjust="spacingAndGlyphs">Pump</text>
<rect x="183.0" y="547.0" width="30" height="14" fill="#fff" stroke="#128A12" stroke-width="2"/>
<rect x="185.5" y="549.5" width="25" height="9" fill="#fff" stroke="#1F701F" stroke-width="1"/>
<text x="192.1" y="557" font-size="8.5" fill="#0C700C" font-weight="bold" letter-spacing="1.9" stroke="#0C700C" stroke-width="0.55">TF</text>
<rect x="204" y="548.5" width="8.5" height="11" fill="#7CC47C" fill-opacity="0.8"/>
<path d="M208.8 551 L212 554 L208.8 557 Z" fill="#000"/>
<rect x="214" y="554" width="4" height="1" fill="url(#gdots)"/>
<circle cx="220.5" cy="554.5" r="2.1" fill="#fff" stroke="#1E7A1E" stroke-width="1.3"/>
<rect x="219.9" y="553.9" width="1.2" height="1.2" fill="#1E7A1E"/>
<rect x="183.5" y="582.5" width="31" height="15" fill="#E4F5E4" stroke="#1F701F" stroke-width="1"/>
<rect x="186.5" y="585.5" width="25" height="9" fill="#fff" stroke="#1F7A1F" stroke-width="1"/>
<rect x="184" y="584.5" width="9" height="11" fill="#5DB45D" fill-opacity="0.55"/>
<path d="M187 587 L190.3 590 L187 593 Z" fill="#000"/>
<text x="193.1" y="593" font-size="8.5" fill="#0C700C" font-weight="bold" letter-spacing="1.9" stroke="#0C700C" stroke-width="0.55">TF</text>
<text x="348.5" y="527" font-size="12" fill="#000" textLength="50.5" lengthAdjust="spacingAndGlyphs">Conveyor</text>
<rect x="348.0" y="532.0" width="30" height="14" fill="#fff" stroke="#128A12" stroke-width="2"/>
<rect x="350.5" y="534.5" width="25" height="9" fill="#fff" stroke="#1F701F" stroke-width="1"/>
<text x="357.1" y="542" font-size="8.5" fill="#0C700C" font-weight="bold" letter-spacing="1.9" stroke="#0C700C" stroke-width="0.55">TF</text>
<rect x="369" y="533.5" width="8.5" height="11" fill="#7CC47C" fill-opacity="0.8"/>
<path d="M373.8 536 L377 539 L373.8 542 Z" fill="#000"/>
<rect x="404.5" y="530.5" width="31" height="15" fill="#E4F5E4" stroke="#1F701F" stroke-width="1"/>
<rect x="407.5" y="533.5" width="25" height="9" fill="#fff" stroke="#1F7A1F" stroke-width="1"/>
<rect x="405" y="532.5" width="9" height="11" fill="#5DB45D" fill-opacity="0.55"/>
<path d="M408 535 L411.3 538 L408 541 Z" fill="#000"/>
<text x="414.1" y="541" font-size="8.5" fill="#0C700C" font-weight="bold" letter-spacing="1.9" stroke="#0C700C" stroke-width="0.55">TF</text>
<rect x="379" y="539" width="25" height="1" fill="url(#gdots)"/>
<rect x="390" y="525" width="1" height="13" fill="url(#gdots)"/>
<rect x="390" y="525" width="136" height="1" fill="url(#gdots)"/>
<rect x="525" y="493" width="1" height="33" fill="url(#gdots)"/>
<circle cx="390.5" cy="539.5" r="2.1" fill="#fff" stroke="#1E7A1E" stroke-width="1.3"/>
<rect x="389.9" y="538.9" width="1.2" height="1.2" fill="#1E7A1E"/>
<rect x="328.5" y="581.5" width="92" height="16" fill="#FFFFD2" stroke="#000" stroke-width="1"/>
<text x="374.5" y="593.6" font-size="12" fill="#000" textLength="87" lengthAdjust="spacingAndGlyphs" text-anchor="middle">DAQ ASSISTANT</text>
<text x="548.5" y="540" font-size="12" fill="#000" textLength="35" lengthAdjust="spacingAndGlyphs">Heater</text>
<rect x="548.0" y="545.0" width="30" height="14" fill="#fff" stroke="#128A12" stroke-width="2"/>
<rect x="550.5" y="547.5" width="25" height="9" fill="#fff" stroke="#1F701F" stroke-width="1"/>
<text x="557.1" y="555" font-size="8.5" fill="#0C700C" font-weight="bold" letter-spacing="1.9" stroke="#0C700C" stroke-width="0.55">TF</text>
<rect x="569" y="546.5" width="8.5" height="11" fill="#7CC47C" fill-opacity="0.8"/>
<path d="M573.8 549 L577 552 L573.8 555 Z" fill="#000"/>
<rect x="548.5" y="572.5" width="31" height="15" fill="#E4F5E4" stroke="#1F701F" stroke-width="1"/>
<rect x="551.5" y="575.5" width="25" height="9" fill="#fff" stroke="#1F7A1F" stroke-width="1"/>
<rect x="549" y="574.5" width="9" height="11" fill="#5DB45D" fill-opacity="0.55"/>
<path d="M552 577 L555.3 580 L552 583 Z" fill="#000"/>
<text x="558.1" y="583" font-size="8.5" fill="#0C700C" font-weight="bold" letter-spacing="1.9" stroke="#0C700C" stroke-width="0.55">TF</text>
<rect x="542" y="493" width="1" height="71" fill="url(#gdots)"/>
<rect x="542" y="563" width="20" height="1" fill="url(#gdots)"/>
<rect x="563" y="560" width="1" height="12" fill="url(#gdots)"/>
<circle cx="563.5" cy="563.5" r="2.1" fill="#fff" stroke="#1E7A1E" stroke-width="1.3"/>
<rect x="562.9" y="562.9" width="1.2" height="1.2" fill="#1E7A1E"/>
<text x="650" y="567.5" font-size="12" fill="#000" textLength="22.5" lengthAdjust="spacingAndGlyphs">stop</text>
<rect x="650.0" y="573.0" width="30" height="14" fill="#fff" stroke="#128A12" stroke-width="2"/>
<rect x="652.5" y="575.5" width="25" height="9" fill="#fff" stroke="#1F701F" stroke-width="1"/>
<text x="659.1" y="583" font-size="8.5" fill="#0C700C" font-weight="bold" letter-spacing="1.9" stroke="#0C700C" stroke-width="0.55">TF</text>
<rect x="671" y="574.5" width="8.5" height="11" fill="#7CC47C" fill-opacity="0.8"/>
<path d="M675.8 577 L679 580 L675.8 583 Z" fill="#000"/>
<rect x="681" y="580" width="2" height="1" fill="url(#gdots)"/>
<rect x="685" y="493" width="1" height="86" fill="url(#gdots)"/>
<circle cx="685.5" cy="580.5" r="2.1" fill="#fff" stroke="#1E7A1E" stroke-width="1.3"/>
<rect x="684.9" y="579.9" width="1.2" height="1.2" fill="#1E7A1E"/>
<rect x="687" y="580" width="314" height="1" fill="url(#gdots)"/>
<rect x="1000" y="580" width="1" height="6" fill="url(#gdots)"/>
<rect x="992.5" y="586.5" width="15" height="15" fill="#fff" stroke="#1E781E" stroke-width="1"/>
<circle cx="1000" cy="594" r="5.3" fill="#fff" stroke="#000" stroke-width="1.2"/>
<circle cx="1000" cy="594" r="3.8" fill="#F80808"/>
<text x="829.5" y="531.8" font-size="12" fill="#000" textLength="82.5" lengthAdjust="spacingAndGlyphs">Change to step:</text>
<rect x="828.5" y="536.5" width="31" height="15" fill="#FFE2B8" stroke="#E8943A" stroke-width="1"/>
<rect x="831.5" y="539.5" width="25" height="9" fill="#fff" stroke="#E8943A" stroke-width="1"/>
<rect x="830.5" y="538.5" width="7.5" height="11" fill="#FFB060" fill-opacity="0.6"/>
<path d="M832 541 L835.3 544 L832 547 Z" fill="#000"/>
<text x="836.2" y="546.9" font-size="8.2" fill="#F07C08" textLength="15.6" lengthAdjust="spacingAndGlyphs" font-weight="bold" stroke="#F07C08" stroke-width="0.6">DBL</text>
<path d="M822.5 493 L822.5 544.5 L828 544.5" fill="none" stroke="#DC8C3C" stroke-width="1"/>
<path d="M425.5 619.5 L450.5 619.5 L454.5 623.8 L454.5 630.8 L450 635.5 L425.5 635.5 L422.5 632.5 L424.5 630.2 L424.5 624.6 L422.5 622.4 Z" fill="#EEF4FF" stroke="#3A6ED0" stroke-width="1"/>
<path d="M426.2 621.5 L449.7 621.5 L452.5 624.5 L452.5 630.2 L449.3 633.5 L426.2 633.5 L424.9 632.3 L426.5 630.5 L426.5 624.3 L424.9 622.6 Z" fill="#fff" stroke="#86AEEA" stroke-width="1"/>
<path d="M425.5 622.5 L451.5 622.5 L451.5 632.5 L425.5 632.5 L427.3 630.5 L427.3 624.5 Z" fill="#FFFFD8" stroke="#000" stroke-width="1.1" stroke-linejoin="miter"/>
<text x="428.3" y="629.8" font-size="7" fill="#E58A20" textLength="11.6" lengthAdjust="spacingAndGlyphs" font-weight="bold">[dbl]</text>
<path d="M441.2 625.5 H443.2 L444.4 627.0 H446.0 L447.2 625.5 H449.2 M441.2 629.5 H443.2 L444.4 628.0 H446.0 L447.2 629.5 H449.2" stroke="#111" stroke-width="1" fill="none"/>
<rect x="444.2" y="626.9" width="2" height="1.2" fill="#111"/>
<rect x="480.6" y="616.9" width="104.8" height="17.500000000000046" fill="#fff" stroke="#2E7D2E" stroke-width="1.2"/>
<path d="M484.8 621.75 L488.90000000000003 625.65 L484.8 629.55 Z" fill="#2E7D2E"/>
<path d="M495.505 621.05 L499.51 625.055 L498.175 625.055 L498.175 629.06 L496.395 629.06 L496.395 626.39 L494.615 626.39 L494.615 629.06 L492.835 629.06 L492.835 625.055 L491.5 625.055 Z" fill="#000"/>
<text x="500.6" y="629.6" font-size="12" fill="#2E8240" textLength="80" lengthAdjust="spacingAndGlyphs">Limit position 1</text>
<rect x="455" y="625.3" width="25.5" height="4" fill="#28288C"/>
<path d="M456 627.3 H479" stroke="#F4F4FF" stroke-width="1.2" stroke-dasharray="2 1.5"/>
<path d="M477.5 624.8 L481.5 627.3 L477.5 629.8 Z" fill="#E01010"/>
<path d="M425.5 646.5 L450.5 646.5 L454.5 650.8 L454.5 657.8 L450 662.5 L425.5 662.5 L422.5 659.5 L424.5 657.2 L424.5 651.6 L422.5 649.4 Z" fill="#EEF4FF" stroke="#3A6ED0" stroke-width="1"/>
<path d="M426.2 648.5 L449.7 648.5 L452.5 651.5 L452.5 657.2 L449.3 660.5 L426.2 660.5 L424.9 659.3 L426.5 657.5 L426.5 651.3 L424.9 649.6 Z" fill="#fff" stroke="#86AEEA" stroke-width="1"/>
<path d="M425.5 649.5 L451.5 649.5 L451.5 659.5 L425.5 659.5 L427.3 657.5 L427.3 651.5 Z" fill="#FFFFD8" stroke="#000" stroke-width="1.1" stroke-linejoin="miter"/>
<text x="428.3" y="656.8" font-size="7" fill="#E58A20" textLength="11.6" lengthAdjust="spacingAndGlyphs" font-weight="bold">[dbl]</text>
<path d="M441.2 652.5 H443.2 L444.4 654.0 H446.0 L447.2 652.5 H449.2 M441.2 656.5 H443.2 L444.4 655.0 H446.0 L447.2 656.5 H449.2" stroke="#111" stroke-width="1" fill="none"/>
<rect x="444.2" y="653.9" width="2" height="1.2" fill="#111"/>
<rect x="480.6" y="646.2" width="104.8" height="16.999999999999932" fill="#fff" stroke="#2E7D2E" stroke-width="1.2"/>
<path d="M484.8 650.8000000000001 L488.90000000000003 654.7 L484.8 658.6 Z" fill="#2E7D2E"/>
<path d="M495.505 650.1 L499.51 654.105 L498.175 654.105 L498.175 658.11 L496.395 658.11 L496.395 655.44 L494.615 655.44 L494.615 658.11 L492.835 658.11 L492.835 654.105 L491.5 654.105 Z" fill="#000"/>
<text x="500.6" y="658.4" font-size="12" fill="#2E8240" textLength="80" lengthAdjust="spacingAndGlyphs">Limit position 2</text>
<rect x="455" y="652.4" width="25.5" height="4" fill="#28288C"/>
<path d="M456 654.4 H479" stroke="#F4F4FF" stroke-width="1.2" stroke-dasharray="2 1.5"/>
<path d="M477.5 651.9 L481.5 654.4 L477.5 656.9 Z" fill="#E01010"/>
<rect x="1045.5" y="313.5" width="33" height="16" fill="#FFFFD2" stroke="#000" stroke-width="1"/>
<text x="1062.0" y="325.6" font-size="12" fill="#000" textLength="28" lengthAdjust="spacingAndGlyphs" text-anchor="middle">MY-1</text>
<rect x="1089.0" y="313.0" width="54" height="17" fill="#fff" stroke="#1C781C" stroke-width="2"/>
<path d="M1097.005 316.9 L1101.01 320.905 L1099.675 320.905 L1099.675 324.90999999999997 L1097.895 324.90999999999997 L1097.895 322.23999999999995 L1096.115 322.23999999999995 L1096.115 324.90999999999997 L1094.335 324.90999999999997 L1094.335 320.905 L1093 320.905 Z" fill="#000"/>
<text x="1102.6" y="325.9" font-size="12" fill="#2E8240" textLength="31" lengthAdjust="spacingAndGlyphs">Pump</text>
<path d="M1136.1 317.6 L1140.1999999999998 321.5 L1136.1 325.4 Z" fill="#1C781C"/>
<rect x="1040.5" y="339.5" width="28" height="16" fill="#FFFFD2" stroke="#000" stroke-width="1"/>
<text x="1054.5" y="351.6" font-size="12" fill="#000" textLength="23" lengthAdjust="spacingAndGlyphs" text-anchor="middle">FV-3</text>
<rect x="1080.0" y="341.0" width="77" height="17" fill="#fff" stroke="#1C781C" stroke-width="2"/>
<path d="M1088.005 344.9 L1092.01 348.905 L1090.675 348.905 L1090.675 352.90999999999997 L1088.895 352.90999999999997 L1088.895 350.23999999999995 L1087.115 350.23999999999995 L1087.115 352.90999999999997 L1085.335 352.90999999999997 L1085.335 348.905 L1084 348.905 Z" fill="#000"/>
<text x="1093.6" y="353.9" font-size="12" fill="#2E8240" textLength="53" lengthAdjust="spacingAndGlyphs">Fill Valve 1</text>
<path d="M1150.1 345.6 L1154.1999999999998 349.5 L1150.1 353.4 Z" fill="#1C781C"/>
<rect x="1043.5" y="374.5" width="28" height="16" fill="#FFFFD2" stroke="#000" stroke-width="1"/>
<text x="1057.5" y="386.6" font-size="12" fill="#000" textLength="23" lengthAdjust="spacingAndGlyphs" text-anchor="middle">FV-1</text>
<rect x="1082.0" y="374.0" width="77" height="17" fill="#fff" stroke="#1C781C" stroke-width="2"/>
<path d="M1090.005 377.9 L1094.01 381.905 L1092.675 381.905 L1092.675 385.90999999999997 L1090.895 385.90999999999997 L1090.895 383.23999999999995 L1089.115 383.23999999999995 L1089.115 385.90999999999997 L1087.335 385.90999999999997 L1087.335 381.905 L1086 381.905 Z" fill="#000"/>
<text x="1095.6" y="386.9" font-size="12" fill="#2E8240" textLength="53" lengthAdjust="spacingAndGlyphs">Fill Valve 2</text>
<path d="M1152.1 378.6 L1156.1999999999998 382.5 L1152.1 386.4 Z" fill="#1C781C"/>
<rect x="1044.5" y="408.5" width="33" height="16" fill="#FFFFD2" stroke="#000" stroke-width="1"/>
<text x="1061.0" y="420.6" font-size="12" fill="#000" textLength="28" lengthAdjust="spacingAndGlyphs" text-anchor="middle">MY-2</text>
<rect x="1087.0" y="409.0" width="73" height="17" fill="#fff" stroke="#1C781C" stroke-width="2"/>
<path d="M1095.005 412.9 L1099.01 416.905 L1097.675 416.905 L1097.675 420.90999999999997 L1095.895 420.90999999999997 L1095.895 418.23999999999995 L1094.115 418.23999999999995 L1094.115 420.90999999999997 L1092.335 420.90999999999997 L1092.335 416.905 L1091 416.905 Z" fill="#000"/>
<text x="1100.6" y="421.9" font-size="12" fill="#2E8240" textLength="50" lengthAdjust="spacingAndGlyphs">Conveyor</text>
<path d="M1153.1 413.6 L1157.1999999999998 417.5 L1153.1 421.4 Z" fill="#1C781C"/>
<rect x="1030.5" y="439.5" width="28" height="16" fill="#FFFFD2" stroke="#000" stroke-width="1"/>
<text x="1044.5" y="451.6" font-size="12" fill="#000" textLength="23" lengthAdjust="spacingAndGlyphs" text-anchor="middle">FV-4</text>
<rect x="1078.0" y="439.0" width="90" height="17" fill="#fff" stroke="#1C781C" stroke-width="2"/>
<path d="M1086.005 442.9 L1090.01 446.905 L1088.675 446.905 L1088.675 450.90999999999997 L1086.895 450.90999999999997 L1086.895 448.23999999999995 L1085.115 448.23999999999995 L1085.115 450.90999999999997 L1083.335 450.90999999999997 L1083.335 446.905 L1082 446.905 Z" fill="#000"/>
<text x="1091.6" y="451.9" font-size="12" fill="#2E8240" textLength="67" lengthAdjust="spacingAndGlyphs">Drain Valve 1</text>
<path d="M1161.1 443.6 L1165.1999999999998 447.5 L1161.1 451.4 Z" fill="#1C781C"/>
<rect x="1060.5" y="463.5" width="29" height="16" fill="#FFFFD2" stroke="#000" stroke-width="1"/>
<text x="1075.0" y="475.6" font-size="12" fill="#000" textLength="24" lengthAdjust="spacingAndGlyphs" text-anchor="middle">TY-1</text>
<rect x="1096.0" y="466.0" width="57" height="17" fill="#fff" stroke="#1C781C" stroke-width="2"/>
<path d="M1104.005 469.9 L1108.01 473.905 L1106.675 473.905 L1106.675 477.90999999999997 L1104.895 477.90999999999997 L1104.895 475.23999999999995 L1103.115 475.23999999999995 L1103.115 477.90999999999997 L1101.335 477.90999999999997 L1101.335 473.905 L1100 473.905 Z" fill="#000"/>
<text x="1109.6" y="478.9" font-size="12" fill="#2E8240" textLength="35" lengthAdjust="spacingAndGlyphs">Heater</text>
<path d="M1146.1 470.6 L1150.1999999999998 474.5 L1146.1 478.4 Z" fill="#1C781C"/>
<rect x="1041.5" y="496.5" width="28" height="16" fill="#FFFFD2" stroke="#000" stroke-width="1"/>
<text x="1055.5" y="508.6" font-size="12" fill="#000" textLength="23" lengthAdjust="spacingAndGlyphs" text-anchor="middle">FV-2</text>
<rect x="1086.0" y="496.0" width="90" height="17" fill="#fff" stroke="#1C781C" stroke-width="2"/>
<path d="M1094.005 499.9 L1098.01 503.905 L1096.675 503.905 L1096.675 507.90999999999997 L1094.895 507.90999999999997 L1094.895 505.23999999999995 L1093.115 505.23999999999995 L1093.115 507.90999999999997 L1091.335 507.90999999999997 L1091.335 503.905 L1090 503.905 Z" fill="#000"/>
<text x="1099.6" y="508.9" font-size="12" fill="#2E8240" textLength="67" lengthAdjust="spacingAndGlyphs">Drain Valve 2</text>
<path d="M1169.1 500.6 L1173.1999999999998 504.5 L1169.1 508.4 Z" fill="#1C781C"/>
<rect x="1144" y="321" width="42" height="1" fill="url(#gdots)"/>
<rect x="1185" y="321" width="1" height="43" fill="url(#gdots)"/>
<rect x="1185" y="363" width="6" height="1" fill="url(#gdots)"/>
<rect x="1158" y="349" width="18" height="1" fill="url(#gdots)"/>
<rect x="1175" y="349" width="1" height="23" fill="url(#gdots)"/>
<rect x="1175" y="371" width="16" height="1" fill="url(#gdots)"/>
<rect x="1160" y="382" width="31" height="1" fill="url(#gdots)"/>
<rect x="1160" y="417" width="8" height="1" fill="url(#gdots)"/>
<rect x="1167" y="387" width="1" height="31" fill="url(#gdots)"/>
<rect x="1167" y="387" width="24" height="1" fill="url(#gdots)"/>
<rect x="1169" y="447" width="7" height="1" fill="url(#gdots)"/>
<rect x="1175" y="395" width="1" height="53" fill="url(#gdots)"/>
<rect x="1175" y="395" width="16" height="1" fill="url(#gdots)"/>
<rect x="1154" y="474" width="32" height="1" fill="url(#gdots)"/>
<rect x="1185" y="403" width="1" height="72" fill="url(#gdots)"/>
<rect x="1185" y="403" width="6" height="1" fill="url(#gdots)"/>
<rect x="1177" y="504" width="14" height="1" fill="url(#gdots)"/>
<rect x="1190" y="437" width="1" height="68" fill="url(#gdots)"/>
<rect x="1185" y="437" width="6" height="1" fill="url(#gdots)"/>
<rect x="1185" y="411" width="1" height="27" fill="url(#gdots)"/>
<rect x="1185" y="411" width="6" height="1" fill="url(#gdots)"/>
<rect x="1191.5" y="359.5" width="31" height="56" fill="#FFFFD2" stroke="#000" stroke-width="1"/>
<path d="M1206.5 359 V416 M1214.5 359 V416" stroke="#000" stroke-width="1"/>
<rect x="1191.5" y="359.50" width="15" height="8" fill="#fff" stroke="#000" stroke-width="1"/>
<text x="1193" y="365.9" font-size="6.8" fill="#147814" letter-spacing="2.55" stroke="#147814" stroke-width="0.3">TF</text>
<rect x="1191.5" y="367.50" width="15" height="8" fill="#fff" stroke="#000" stroke-width="1"/>
<text x="1193" y="373.9" font-size="6.8" fill="#147814" letter-spacing="2.55" stroke="#147814" stroke-width="0.3">TF</text>
<rect x="1191.5" y="375.50" width="15" height="8" fill="#fff" stroke="#000" stroke-width="1"/>
<text x="1193" y="381.9" font-size="6.8" fill="#147814" letter-spacing="2.55" stroke="#147814" stroke-width="0.3">TF</text>
<rect x="1191.5" y="383.50" width="15" height="8" fill="#fff" stroke="#000" stroke-width="1"/>
<text x="1193" y="389.9" font-size="6.8" fill="#147814" letter-spacing="2.55" stroke="#147814" stroke-width="0.3">TF</text>
<rect x="1191.5" y="391.50" width="15" height="8" fill="#fff" stroke="#000" stroke-width="1"/>
<text x="1193" y="397.9" font-size="6.8" fill="#147814" letter-spacing="2.55" stroke="#147814" stroke-width="0.3">TF</text>
<rect x="1191.5" y="399.50" width="15" height="8" fill="#fff" stroke="#000" stroke-width="1"/>
<text x="1193" y="405.9" font-size="6.8" fill="#147814" letter-spacing="2.55" stroke="#147814" stroke-width="0.3">TF</text>
<rect x="1191.5" y="407.50" width="15" height="8" fill="#fff" stroke="#000" stroke-width="1"/>
<text x="1193" y="413.9" font-size="6.8" fill="#147814" letter-spacing="2.55" stroke="#147814" stroke-width="0.3">TF</text>
<path d="M1206.8 385.2 Q1208.6 387.5 1206.8 389.8 H1216.3 V391.3 L1221.8 387.5 L1216.3 383.7 V385.2 Z" fill="#000"/>
<rect x="1223" y="386" width="36.5" height="3" fill="#E22EE2"/>
<path d="M1224 387.5 H1259" stroke="#fff" stroke-width="1" stroke-dasharray="2 2"/>
<path d="M1258.5 384.5 H1279 Q1284.5 389.5 1279 394.5 H1258.5 L1261 392 V387 Z" fill="#FFFFD2" stroke="#000" stroke-width="1"/>
<path d="M1263 386.5 H1269 M1263 388.5 H1269 M1263 390.5 H1269 M1263 392.5 H1269 M1263.5 386 V393 M1268.5 386 V393" stroke="#000" stroke-width="1"/>
<path d="M1274.5 386.5 H1272.5 V392.5 H1274.5 M1277 386.5 H1279 V392.5 H1277" stroke="#000" stroke-width="1.4" fill="none"/>
<rect x="1225.5" y="448.5" width="92" height="16" fill="#FFFFD2" stroke="#000" stroke-width="1"/>
<text x="1271.5" y="460.6" font-size="12" fill="#000" textLength="87" lengthAdjust="spacingAndGlyphs" text-anchor="middle">DAQ ASSISTANT</text>
<rect x="2" y="692" width="16" height="6.3" fill="#FFFFD2"/>
<path d="M3 698.3 V693 H17 V698.3" fill="none" stroke="#0A0AD2" stroke-width="2"/>
<rect x="9" y="696" width="2" height="1" fill="#000"/>
</g>
</svg>
</body></html>
